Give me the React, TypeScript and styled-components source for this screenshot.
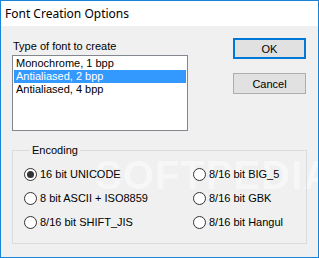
import React from "react";
import styled, { createGlobalStyle } from "styled-components";

const Global = createGlobalStyle`
  html, body { margin: 0; padding: 0; background: #ffffff; }
  * { box-sizing: border-box; }
`;

const Window = styled.div`
  position: relative;
  width: 319px;
  height: 258px;
  border: 1px solid #1883d7;
  background: #f0f0f0;
  display: flex;
  flex-direction: column;
  overflow: hidden;
  font-family: "Liberation Sans", Arial, sans-serif;
  font-size: 11px;
  color: #000;
`;

const TitleBar = styled.div`
  height: 25px;
  background: #ffffff;
  display: flex;
  align-items: center;
  padding-left: 4px;
  font-family: "Noto Sans", "Open Sans", sans-serif;
  font-size: 12px;
  color: #000;
`;

const Body = styled.div`
  position: relative;
  z-index: 1;
  flex: 1;
  padding: 12px 11px 0 11px;
  display: flex;
  flex-direction: column;
`;

const TopRow = styled.div`
  display: flex;
  justify-content: space-between;
  align-items: flex-start;
`;

const LeftCol = styled.div`
  display: flex;
  flex-direction: column;
`;

const Label = styled.div`
  height: 14px;
  line-height: 14px;
  margin-top: 1px;
  margin-bottom: 2px;
  padding-left: 1px;
`;

const ListBox = styled.div`
  width: 176px;
  height: 76px;
  background: #ffffff;
  border: 1px solid #828790;
  padding: 1px;
  display: flex;
  flex-direction: column;
`;

const ListItem = styled.div<{ $selected?: boolean }>`
  height: 13px;
  line-height: 13px;
  padding-left: 2px;
  background: ${(p) => (p.$selected ? "#3399ff" : "transparent")};
  color: ${(p) => (p.$selected ? "#ffffff" : "#000000")};
  white-space: nowrap;
`;

const ButtonCol = styled.div`
  display: flex;
  flex-direction: column;
  gap: 14px;
  margin-right: 1px;
`;

const Button = styled.div<{ $default?: boolean }>`
  width: 73px;
  height: 21px;
  background: #e1e1e1;
  border: ${(p) => (p.$default ? "2px solid #0078d7" : "1px solid #adadad")};
  display: flex;
  align-items: center;
  justify-content: center;
  font-size: 11px;
`;

const Group = styled.fieldset`
  margin: 13px 0 0 0;
  padding: 5px 0 9px 11px;
  border: 1px solid #dcdcdc;
  min-width: 0;
`;

const Legend = styled.legend`
  margin-left: 6px;
  padding: 0 2px;
  line-height: 13px;
`;

const RadioGrid = styled.div`
  display: grid;
  grid-template-columns: 169px 1fr;
  grid-auto-rows: 24px;
`;

const RadioItem = styled.div`
  display: flex;
  align-items: center;
  gap: 3px;
  white-space: nowrap;
`;

const Circle = styled.span<{ $checked?: boolean }>`
  width: 13px;
  height: 13px;
  border-radius: 50%;
  border: 1px solid #333333;
  background: #ffffff;
  display: flex;
  align-items: center;
  justify-content: center;
  flex: none;
  &::after {
    content: "";
    width: 7px;
    height: 7px;
    border-radius: 50%;
    background: ${(p) => (p.$checked ? "#333333" : "transparent")};
  }
`;

const Watermark = styled.div`
  position: absolute;
  z-index: 0;
  left: 94px;
  top: 152px;
  font-family: "Liberation Sans", Arial, sans-serif;
  font-weight: bold;
  font-size: 40px;
  letter-spacing: 1px;
  color: rgba(255, 255, 255, 0.7);
  text-shadow: 0 0 1px rgba(0, 0, 0, 0.04);
  pointer-events: none;
`;

const Radio = ({ label, checked }: { label: string; checked?: boolean }) => (
  <RadioItem>
    <Circle $checked={checked} />
    <span>{label}</span>
  </RadioItem>
);

export default function App() {
  return (
    <>
      <Global />
      <Window>
        <TitleBar>Font Creation Options</TitleBar>
        <Watermark aria-hidden="true">SOFTPEDIA</Watermark>
        <Body>
          <TopRow>
            <LeftCol>
              <Label>Type of font to create</Label>
              <ListBox>
                <ListItem>Monochrome, 1 bpp</ListItem>
                <ListItem $selected>Antialiased, 2 bpp</ListItem>
                <ListItem>Antialiased, 4 bpp</ListItem>
              </ListBox>
            </LeftCol>
            <ButtonCol>
              <Button $default>OK</Button>
              <Button>Cancel</Button>
            </ButtonCol>
          </TopRow>
          <Group>
            <Legend>Encoding</Legend>
            <RadioGrid>
              <Radio label="16 bit UNICODE" checked />
              <Radio label="8/16 bit BIG_5" />
              <Radio label="8 bit ASCII + ISO8859" />
              <Radio label="8/16 bit GBK" />
              <Radio label="8/16 bit SHIFT_JIS" />
              <Radio label="8/16 bit Hangul" />
            </RadioGrid>
          </Group>
        </Body>
      </Window>
    </>
  );
}
